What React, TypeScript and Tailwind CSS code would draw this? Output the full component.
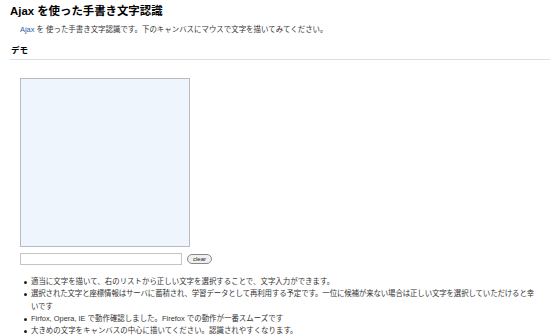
export default function App() {
  const ff = { fontFamily: '"Liberation Sans", "Noto Sans CJK JP", sans-serif' };
  const items: { t: React.ReactNode; cls?: string }[] = [
    { t: "適当に文字を描いて、右のリストから正しい文字を選択することで、文字入力ができます。" },
    {
      t: (
        <>
          選択された文字と座標情報はサーバに蓄積され、学習データとして再利用する予定です。一位に候補が来ない場合は正しい文字を選択していただけると幸
          <br />
          いです
        </>
      ),
      cls: "tracking-[-0.13px] whitespace-nowrap",
    },
    { t: "Firfox, Opera, IE で動作確認しました。Firefox での動作が一番スムーズです" },
    { t: "大きめの文字をキャンバスの中心に描いてください。認識されやすくなります。" },
  ];
  return (
    <div className="w-[550px] h-[335px] bg-white overflow-hidden text-[#222]" style={ff}>
      <h1 className="pl-[10px] pt-[3px] text-[11.4px] leading-[16px] font-bold text-black">Ajax を使った手書き文字認識</h1>
      <p className="pl-[20px] mt-[6px] text-[7.45px] leading-[10px] text-[#333]">
        <span className="text-[#1e5fa8]">Ajax</span> を 使った手書き文字認識です。下のキャンバスにマウスで文字を描いてみてください。
      </p>
      <h2 className="ml-[10px] mt-[10px] pl-[1px] pb-[3px] text-[8.5px] leading-[11px] font-bold text-black border-b border-[#d6e0e6]">デモ</h2>
      <div className="pl-[20px] pt-[18px]">
        <div className="w-[170px] h-[169px] bg-[#eef5fd] border border-[#b8bcc0]" />
        <div className="flex items-center mt-[6px] gap-[5px]">
          <div className="w-[162px] h-[12px] border border-[#c4c4c4] bg-white" />
          <div className="h-[10px] px-[5px] rounded-full border border-[#888] bg-[#f0f0f0] text-[6px] leading-[8px] text-[#222] flex items-center">clear</div>
        </div>
      </div>
      <ul className="mt-[11px] pl-[31px] w-[545px] text-[7.45px] leading-[12.3px] text-[#333]">
        {items.map((it, i) => (
          <li key={i} className={"relative " + (it.cls ?? "")}>
            <span className="absolute left-[-7px] top-[5px] w-[3px] h-[3px] rounded-full bg-[#222]" />
            {it.t}
          </li>
        ))}
      </ul>
    </div>
  );
}
